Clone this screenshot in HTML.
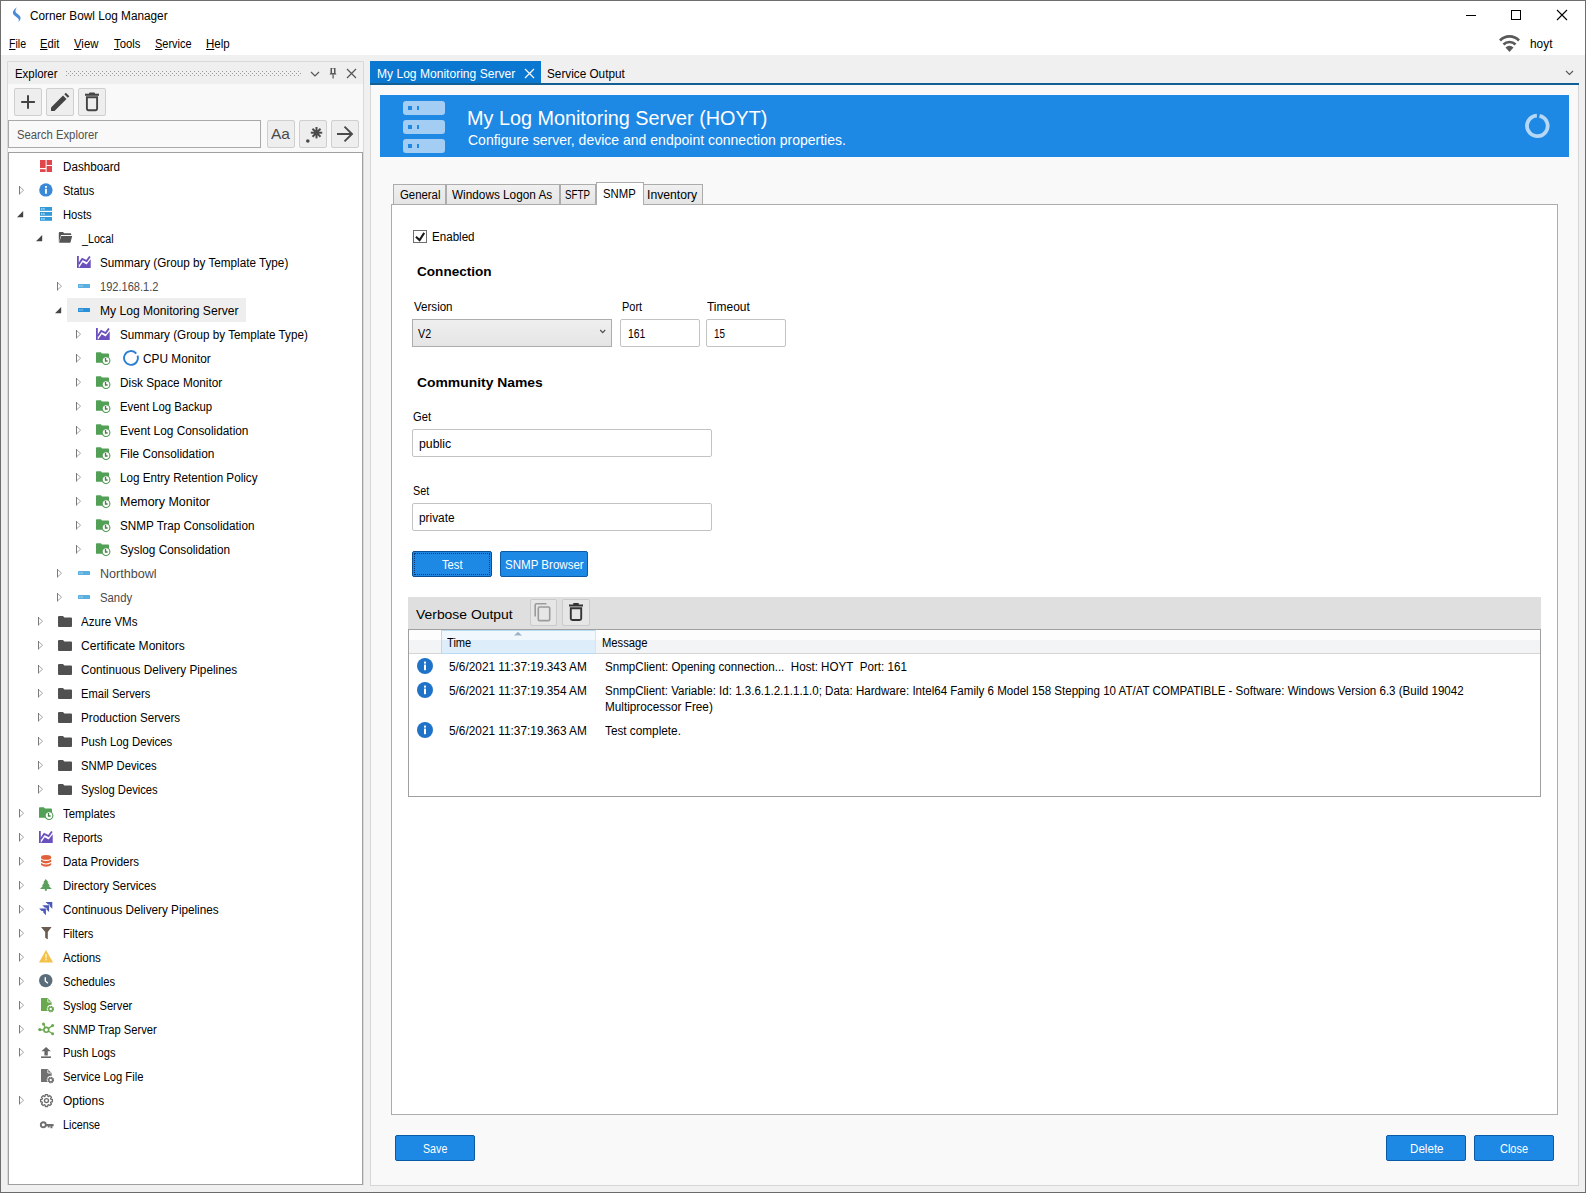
<!DOCTYPE html>
<html><head><meta charset="utf-8"><style>
html,body{margin:0;padding:0;width:1586px;height:1193px;overflow:hidden;background:#f0f0f0}
body{position:relative;font-family:"Liberation Sans", sans-serif;}
.b{position:absolute;display:block}
.t{position:absolute;white-space:nowrap;line-height:1.2;font-family:"Liberation Sans", sans-serif}
</style></head><body>
<div class="b" style="left:0px;top:0px;width:1586px;height:1193px;background:#f0f0f0"></div>
<div class="b" style="left:0px;top:0px;width:1586px;height:55px;background:#fff"></div>
<div class="b" style="left:0px;top:0px;width:1586px;height:1px;background:#6e6e6e"></div>
<div class="b" style="left:0px;top:0px;width:1px;height:1193px;background:#6e6e6e"></div>
<div class="b" style="left:1585px;top:0px;width:1px;height:1193px;background:#6e6e6e"></div>
<div class="b" style="left:0px;top:1192px;width:1586px;height:1px;background:#6a6a6a"></div>
<svg class="b" style="left:11px;top:6px;" width="12" height="18" viewBox="0 0 12 18"><path d="M5.9 1.2 C3.2 3 1.2 5.5 2.2 8 C3 10 6.5 11 7.6 13 C8 14 7.8 15 7.3 16 C9.5 14.5 10 12.5 9.2 10.6 C8.2 8.5 5 7.5 4.6 6 C4.2 4.5 4.8 2.8 5.9 1.2 Z" fill="#4a8ad6"/></svg>
<div class="t" style="left:30.40px;top:8.64px;font-size:12px;color:#000;font-weight:normal;"><span style="display:inline-block;transform:scaleX(0.9823);transform-origin:0 0">Corner Bowl Log Manager</span></div>
<div class="b" style="left:1466px;top:15px;width:10px;height:1px;background:#000"></div>
<div class="b" style="left:1511px;top:10px;width:10px;height:10px;border:1px solid #000;box-sizing:border-box"></div>
<svg class="b" style="left:1556px;top:9px;" width="12" height="12" viewBox="0 0 12 12"><path d="M1 1 L11 11 M11 1 L1 11" stroke="#000" stroke-width="1.1"/></svg>
<svg class="b" style="left:1498px;top:33px;" width="23" height="20" viewBox="0 0 23 20"><path d="M2 7.5 A13 13 0 0 1 21 7.5" stroke="#595959" stroke-width="2.6" fill="none"/><path d="M5.5 11.5 A8.5 8.5 0 0 1 17.5 11.5" stroke="#595959" stroke-width="2.6" fill="none"/><path d="M7.5 14.5 L11.5 19 L15.5 14.5 A5.5 5.5 0 0 0 7.5 14.5Z" fill="#595959"/></svg>
<div class="t" style="left:1529.80px;top:36.64px;font-size:12px;color:#000;font-weight:normal;"><span style="display:inline-block;transform:scaleX(0.9894);transform-origin:0 0">hoyt</span></div>
<div class="t" style="left:8.70px;top:36.64px;font-size:12px;color:#000;font-weight:normal;"><span style="display:inline-block;transform:scaleX(0.8799);transform-origin:0 0"><u>F</u>ile</span></div>
<div class="t" style="left:40.30px;top:36.64px;font-size:12px;color:#000;font-weight:normal;"><span style="display:inline-block;transform:scaleX(0.9324);transform-origin:0 0"><u>E</u>dit</span></div>
<div class="t" style="left:74.40px;top:36.64px;font-size:12px;color:#000;font-weight:normal;"><span style="display:inline-block;transform:scaleX(0.9454);transform-origin:0 0"><u>V</u>iew</span></div>
<div class="t" style="left:113.60px;top:36.64px;font-size:12px;color:#000;font-weight:normal;"><span style="display:inline-block;transform:scaleX(0.9424);transform-origin:0 0"><u>T</u>ools</span></div>
<div class="t" style="left:154.60px;top:36.64px;font-size:12px;color:#000;font-weight:normal;"><span style="display:inline-block;transform:scaleX(0.9122);transform-origin:0 0"><u>S</u>ervice</span></div>
<div class="t" style="left:206.00px;top:36.64px;font-size:12px;color:#000;font-weight:normal;"><span style="display:inline-block;transform:scaleX(0.9598);transform-origin:0 0"><u>H</u>elp</span></div>
<div class="b" style="left:7px;top:61px;width:357px;height:1124px;background:#f9f9f9;border:1px solid #d9d9d9;box-sizing:border-box"></div>
<div class="b" style="left:8px;top:62px;width:355px;height:22px;background:#efefef"></div>
<div class="t" style="left:14.60px;top:66.64px;font-size:12px;color:#000;font-weight:normal;"><span style="display:inline-block;transform:scaleX(0.9510);transform-origin:0 0">Explorer</span></div>
<svg class="b" style="left:64px;top:71px;" width="238" height="5" viewBox="0 0 238 5"><g fill="#9a9a9a"><rect x="2" y="0" width="1" height="1"/><rect x="4" y="2" width="1" height="1"/><rect x="2" y="4" width="1" height="1"/><rect x="6" y="0" width="1" height="1"/><rect x="8" y="2" width="1" height="1"/><rect x="6" y="4" width="1" height="1"/><rect x="10" y="0" width="1" height="1"/><rect x="12" y="2" width="1" height="1"/><rect x="10" y="4" width="1" height="1"/><rect x="14" y="0" width="1" height="1"/><rect x="16" y="2" width="1" height="1"/><rect x="14" y="4" width="1" height="1"/><rect x="18" y="0" width="1" height="1"/><rect x="20" y="2" width="1" height="1"/><rect x="18" y="4" width="1" height="1"/><rect x="22" y="0" width="1" height="1"/><rect x="24" y="2" width="1" height="1"/><rect x="22" y="4" width="1" height="1"/><rect x="26" y="0" width="1" height="1"/><rect x="28" y="2" width="1" height="1"/><rect x="26" y="4" width="1" height="1"/><rect x="30" y="0" width="1" height="1"/><rect x="32" y="2" width="1" height="1"/><rect x="30" y="4" width="1" height="1"/><rect x="34" y="0" width="1" height="1"/><rect x="36" y="2" width="1" height="1"/><rect x="34" y="4" width="1" height="1"/><rect x="38" y="0" width="1" height="1"/><rect x="40" y="2" width="1" height="1"/><rect x="38" y="4" width="1" height="1"/><rect x="42" y="0" width="1" height="1"/><rect x="44" y="2" width="1" height="1"/><rect x="42" y="4" width="1" height="1"/><rect x="46" y="0" width="1" height="1"/><rect x="48" y="2" width="1" height="1"/><rect x="46" y="4" width="1" height="1"/><rect x="50" y="0" width="1" height="1"/><rect x="52" y="2" width="1" height="1"/><rect x="50" y="4" width="1" height="1"/><rect x="54" y="0" width="1" height="1"/><rect x="56" y="2" width="1" height="1"/><rect x="54" y="4" width="1" height="1"/><rect x="58" y="0" width="1" height="1"/><rect x="60" y="2" width="1" height="1"/><rect x="58" y="4" width="1" height="1"/><rect x="62" y="0" width="1" height="1"/><rect x="64" y="2" width="1" height="1"/><rect x="62" y="4" width="1" height="1"/><rect x="66" y="0" width="1" height="1"/><rect x="68" y="2" width="1" height="1"/><rect x="66" y="4" width="1" height="1"/><rect x="70" y="0" width="1" height="1"/><rect x="72" y="2" width="1" height="1"/><rect x="70" y="4" width="1" height="1"/><rect x="74" y="0" width="1" height="1"/><rect x="76" y="2" width="1" height="1"/><rect x="74" y="4" width="1" height="1"/><rect x="78" y="0" width="1" height="1"/><rect x="80" y="2" width="1" height="1"/><rect x="78" y="4" width="1" height="1"/><rect x="82" y="0" width="1" height="1"/><rect x="84" y="2" width="1" height="1"/><rect x="82" y="4" width="1" height="1"/><rect x="86" y="0" width="1" height="1"/><rect x="88" y="2" width="1" height="1"/><rect x="86" y="4" width="1" height="1"/><rect x="90" y="0" width="1" height="1"/><rect x="92" y="2" width="1" height="1"/><rect x="90" y="4" width="1" height="1"/><rect x="94" y="0" width="1" height="1"/><rect x="96" y="2" width="1" height="1"/><rect x="94" y="4" width="1" height="1"/><rect x="98" y="0" width="1" height="1"/><rect x="100" y="2" width="1" height="1"/><rect x="98" y="4" width="1" height="1"/><rect x="102" y="0" width="1" height="1"/><rect x="104" y="2" width="1" height="1"/><rect x="102" y="4" width="1" height="1"/><rect x="106" y="0" width="1" height="1"/><rect x="108" y="2" width="1" height="1"/><rect x="106" y="4" width="1" height="1"/><rect x="110" y="0" width="1" height="1"/><rect x="112" y="2" width="1" height="1"/><rect x="110" y="4" width="1" height="1"/><rect x="114" y="0" width="1" height="1"/><rect x="116" y="2" width="1" height="1"/><rect x="114" y="4" width="1" height="1"/><rect x="118" y="0" width="1" height="1"/><rect x="120" y="2" width="1" height="1"/><rect x="118" y="4" width="1" height="1"/><rect x="122" y="0" width="1" height="1"/><rect x="124" y="2" width="1" height="1"/><rect x="122" y="4" width="1" height="1"/><rect x="126" y="0" width="1" height="1"/><rect x="128" y="2" width="1" height="1"/><rect x="126" y="4" width="1" height="1"/><rect x="130" y="0" width="1" height="1"/><rect x="132" y="2" width="1" height="1"/><rect x="130" y="4" width="1" height="1"/><rect x="134" y="0" width="1" height="1"/><rect x="136" y="2" width="1" height="1"/><rect x="134" y="4" width="1" height="1"/><rect x="138" y="0" width="1" height="1"/><rect x="140" y="2" width="1" height="1"/><rect x="138" y="4" width="1" height="1"/><rect x="142" y="0" width="1" height="1"/><rect x="144" y="2" width="1" height="1"/><rect x="142" y="4" width="1" height="1"/><rect x="146" y="0" width="1" height="1"/><rect x="148" y="2" width="1" height="1"/><rect x="146" y="4" width="1" height="1"/><rect x="150" y="0" width="1" height="1"/><rect x="152" y="2" width="1" height="1"/><rect x="150" y="4" width="1" height="1"/><rect x="154" y="0" width="1" height="1"/><rect x="156" y="2" width="1" height="1"/><rect x="154" y="4" width="1" height="1"/><rect x="158" y="0" width="1" height="1"/><rect x="160" y="2" width="1" height="1"/><rect x="158" y="4" width="1" height="1"/><rect x="162" y="0" width="1" height="1"/><rect x="164" y="2" width="1" height="1"/><rect x="162" y="4" width="1" height="1"/><rect x="166" y="0" width="1" height="1"/><rect x="168" y="2" width="1" height="1"/><rect x="166" y="4" width="1" height="1"/><rect x="170" y="0" width="1" height="1"/><rect x="172" y="2" width="1" height="1"/><rect x="170" y="4" width="1" height="1"/><rect x="174" y="0" width="1" height="1"/><rect x="176" y="2" width="1" height="1"/><rect x="174" y="4" width="1" height="1"/><rect x="178" y="0" width="1" height="1"/><rect x="180" y="2" width="1" height="1"/><rect x="178" y="4" width="1" height="1"/><rect x="182" y="0" width="1" height="1"/><rect x="184" y="2" width="1" height="1"/><rect x="182" y="4" width="1" height="1"/><rect x="186" y="0" width="1" height="1"/><rect x="188" y="2" width="1" height="1"/><rect x="186" y="4" width="1" height="1"/><rect x="190" y="0" width="1" height="1"/><rect x="192" y="2" width="1" height="1"/><rect x="190" y="4" width="1" height="1"/><rect x="194" y="0" width="1" height="1"/><rect x="196" y="2" width="1" height="1"/><rect x="194" y="4" width="1" height="1"/><rect x="198" y="0" width="1" height="1"/><rect x="200" y="2" width="1" height="1"/><rect x="198" y="4" width="1" height="1"/><rect x="202" y="0" width="1" height="1"/><rect x="204" y="2" width="1" height="1"/><rect x="202" y="4" width="1" height="1"/><rect x="206" y="0" width="1" height="1"/><rect x="208" y="2" width="1" height="1"/><rect x="206" y="4" width="1" height="1"/><rect x="210" y="0" width="1" height="1"/><rect x="212" y="2" width="1" height="1"/><rect x="210" y="4" width="1" height="1"/><rect x="214" y="0" width="1" height="1"/><rect x="216" y="2" width="1" height="1"/><rect x="214" y="4" width="1" height="1"/><rect x="218" y="0" width="1" height="1"/><rect x="220" y="2" width="1" height="1"/><rect x="218" y="4" width="1" height="1"/><rect x="222" y="0" width="1" height="1"/><rect x="224" y="2" width="1" height="1"/><rect x="222" y="4" width="1" height="1"/><rect x="226" y="0" width="1" height="1"/><rect x="228" y="2" width="1" height="1"/><rect x="226" y="4" width="1" height="1"/><rect x="230" y="0" width="1" height="1"/><rect x="232" y="2" width="1" height="1"/><rect x="230" y="4" width="1" height="1"/><rect x="234" y="0" width="1" height="1"/><rect x="236" y="2" width="1" height="1"/><rect x="234" y="4" width="1" height="1"/></g></svg>
<svg class="b" style="left:310px;top:71px;" width="10" height="6" viewBox="0 0 10 6"><path d="M1 1 L5 5 L9 1" stroke="#555" stroke-width="1.2" fill="none"/></svg>
<svg class="b" style="left:328px;top:67px;" width="10" height="12" viewBox="0 0 10 12"><path d="M2.5 1 H7.5 V6 L8.5 7.5 H1.5 L2.5 6 Z" fill="#555"/><rect x="4" y="1.5" width="2" height="4.5" fill="#eee"/><rect x="4.5" y="7.5" width="1.2" height="4" fill="#555"/></svg>
<svg class="b" style="left:346px;top:68px;" width="11" height="11" viewBox="0 0 11 11"><path d="M1 1 L10 10 M10 1 L1 10" stroke="#555" stroke-width="1.2"/></svg>
<div class="b" style="left:14px;top:88px;width:28px;height:28px;background:#eeeeee;border:1px solid #cfcfcf;border-radius:2px;box-sizing:border-box"></div>
<div class="b" style="left:46px;top:88px;width:28px;height:28px;background:#eeeeee;border:1px solid #cfcfcf;border-radius:2px;box-sizing:border-box"></div>
<div class="b" style="left:78px;top:88px;width:28px;height:28px;background:#eeeeee;border:1px solid #cfcfcf;border-radius:2px;box-sizing:border-box"></div>
<svg class="b" style="left:14px;top:88px;" width="28" height="28" viewBox="0 0 28 28"><path d="M14 7.2 V20.8 M7.2 14 H20.9" stroke="#444" stroke-width="2"/></svg>
<svg class="b" style="left:46px;top:88px;" width="28" height="28" viewBox="0 0 28 28"><path d="M5 19.5 L17 7.5 L20.5 11 L8.5 23 L5 23 Z" fill="#444"/><path d="M18.3 6.2 L19.8 4.7 L23.3 8.2 L21.8 9.7 Z" fill="#444"/></svg>
<svg class="b" style="left:78px;top:88px;" width="28" height="28" viewBox="0 0 28 28"><rect x="7" y="5.7" width="14" height="2.1" fill="#444"/><rect x="11" y="4.6" width="6" height="2" rx="1" fill="#444"/><path d="M8.9 9.3 H19.1 V20.3 Q19.1 22.2 17.4 22.2 H10.6 Q8.9 22.2 8.9 20.3 Z" fill="none" stroke="#444" stroke-width="1.9"/></svg>
<div class="b" style="left:8px;top:120px;width:253px;height:28px;background:#f9f9f9;border:1px solid #a9a9a9;box-sizing:border-box"></div>
<div class="t" style="left:17.30px;top:127.84px;font-size:12px;color:#505050;font-weight:normal;"><span style="display:inline-block;transform:scaleX(0.9414);transform-origin:0 0">Search Explorer</span></div>
<div class="b" style="left:267px;top:120px;width:28px;height:28px;background:#eeeeee;border:1px solid #cfcfcf;border-radius:2px;box-sizing:border-box"></div>
<div class="b" style="left:299px;top:120px;width:28px;height:28px;background:#eeeeee;border:1px solid #cfcfcf;border-radius:2px;box-sizing:border-box"></div>
<div class="b" style="left:331px;top:120px;width:28px;height:28px;background:#eeeeee;border:1px solid #cfcfcf;border-radius:2px;box-sizing:border-box"></div>
<div class="t" style="left:271.10px;top:125.30px;font-size:15px;color:#4a4a4a;font-weight:normal;"><span style="display:inline-block;transform:scaleX(1.0313);transform-origin:0 0">Aa</span></div>
<svg class="b" style="left:299px;top:120px;" width="28" height="28" viewBox="0 0 28 28"><circle cx="8.8" cy="21" r="1.8" fill="#4a4a4a"/><g stroke="#4a4a4a" stroke-width="2"><path d="M17.5 7 V18.4"/><path d="M11.8 12.7 H23.2"/><path d="M13.5 8.7 L21.5 16.7"/><path d="M21.5 8.7 L13.5 16.7"/></g><circle cx="17.5" cy="12.7" r="2.6" fill="#4a4a4a"/></svg>
<svg class="b" style="left:331px;top:120px;" width="28" height="28" viewBox="0 0 28 28"><path d="M6 14 H21.2 M13.5 6.6 L21 14 L13.5 21.4" stroke="#4a4a4a" stroke-width="1.9" fill="none"/></svg>
<div class="b" style="left:8px;top:152px;width:355px;height:1033px;background:#fff;border:1px solid #a0a0a0;box-sizing:border-box"></div>
<svg class="b" style="left:40px;top:160.0px;overflow:visible" width="12" height="12" viewBox="0 0 12 12"><g fill="#e0474c"><rect x="0" y="0" width="5.6" height="8"/><rect x="0" y="9.2" width="5.6" height="2.8"/><rect x="6.6" y="0" width="5.4" height="5"/><rect x="6.6" y="6" width="5.4" height="6"/></g></svg>
<div class="t" style="left:62.80px;top:159.54px;font-size:12px;color:#000;font-weight:normal;"><span style="display:inline-block;transform:scaleX(0.9719);transform-origin:0 0">Dashboard</span></div>
<svg class="b" style="left:19px;top:186.0px;" width="6" height="9" viewBox="0 0 6 9"><path d="M0.5 0.5 L4.6 4.2 L0.5 7.9" fill="none" stroke="#a6a6a6" stroke-width="1"/><path d="M0.5 0 V8.4" stroke="#7a7a7a" stroke-width="1"/></svg>
<svg class="b" style="left:39px;top:183.0px;overflow:visible" width="14" height="14" viewBox="0 0 14 14"><circle cx="6.9" cy="6.9" r="6.7" fill="#3a88d8"/><rect x="6" y="3" width="1.9" height="1.8" fill="#fff"/><rect x="6" y="5.8" width="1.9" height="4.9" fill="#fff"/></svg>
<div class="t" style="left:62.80px;top:183.54px;font-size:12px;color:#000;font-weight:normal;"><span style="display:inline-block;transform:scaleX(0.9171);transform-origin:0 0">Status</span></div>
<svg class="b" style="left:16.5px;top:211.0px;" width="7" height="7" viewBox="0 0 7 7"><path d="M6.2 0 V6.2 H0 Z" fill="#454545"/></svg>
<svg class="b" style="left:40px;top:206.5px;overflow:visible" width="12" height="14" viewBox="0 0 12 14"><g fill="#3399d9"><rect x="0" y="0" width="12" height="3.8"/><rect x="0" y="5" width="12" height="3.8"/><rect x="0" y="10" width="12" height="3.8"/></g><g fill="#e6f3fb"><rect x="1.1" y="1.3" width="1.3" height="1.3"/><rect x="3.3" y="1.3" width="1.3" height="1.3"/><rect x="1.1" y="6.3" width="1.3" height="1.3"/><rect x="3.3" y="6.3" width="1.3" height="1.3"/><rect x="1.1" y="11.3" width="1.3" height="1.3"/><rect x="3.3" y="11.3" width="1.3" height="1.3"/></g></svg>
<div class="t" style="left:62.80px;top:207.54px;font-size:12px;color:#000;font-weight:normal;"><span style="display:inline-block;transform:scaleX(0.9357);transform-origin:0 0">Hosts</span></div>
<svg class="b" style="left:35.5px;top:235.0px;" width="7" height="7" viewBox="0 0 7 7"><path d="M6.2 0 V6.2 H0 Z" fill="#454545"/></svg>
<svg class="b" style="left:58px;top:231.5px;overflow:visible" width="15" height="11" viewBox="0 0 15 11"><path d="M0.8 1 Q0.8 0 1.8 0 H5 L6.2 1.2 H12.5 Q13.2 1.2 13.2 2 V3 H3 L1 10 H0.8 Z" fill="#555"/><path d="M3.2 4 H14.2 L12.4 10.8 H1 Z" fill="#555"/></svg>
<div class="t" style="left:82.19px;top:231.54px;font-size:12px;color:#000;font-weight:normal;"><span style="display:inline-block;transform:scaleX(0.8909);transform-origin:0 0">_Local</span></div>
<svg class="b" style="left:77px;top:255.5px;overflow:visible" width="14" height="12" viewBox="0 0 14 12"><g fill="#6a4fbd"><rect x="0" y="0" width="1.8" height="12"/><path d="M1.8 12 L5.7 6.3 L9.6 8.4 L13.7 3.2 V12 Z"/></g><path d="M1.6 8.2 L5.2 2.9 L9.6 5.1 L12.9 0.4" fill="none" stroke="#6a4fbd" stroke-width="1.8"/></svg>
<div class="t" style="left:100.30px;top:255.54px;font-size:12px;color:#000;font-weight:normal;"><span style="display:inline-block;transform:scaleX(0.9757);transform-origin:0 0">Summary (Group by Template Type)</span></div>
<svg class="b" style="left:57px;top:282.0px;" width="6" height="9" viewBox="0 0 6 9"><path d="M0.5 0.5 L4.6 4.2 L0.5 7.9" fill="none" stroke="#a6a6a6" stroke-width="1"/><path d="M0.5 0 V8.4" stroke="#7a7a7a" stroke-width="1"/></svg>
<svg class="b" style="left:78px;top:283.7px;overflow:visible" width="12" height="4" viewBox="0 0 12 4"><rect x="0" y="0" width="12" height="4" rx="0.5" fill="#5aaee0"/><rect x="1.3" y="1.5" width="1.2" height="1" fill="#d8eefa"/><rect x="3.5" y="1.5" width="1.2" height="1" fill="#d8eefa"/></svg>
<div class="t" style="left:100.30px;top:279.54px;font-size:12px;color:#4a4a4a;font-weight:normal;"><span style="display:inline-block;transform:scaleX(0.9228);transform-origin:0 0">192.168.1.2</span></div>
<div class="b" style="left:67px;top:298px;width:179px;height:24px;background:#eeeeee"></div>
<svg class="b" style="left:54.5px;top:307.0px;" width="7" height="7" viewBox="0 0 7 7"><path d="M6.2 0 V6.2 H0 Z" fill="#454545"/></svg>
<svg class="b" style="left:78px;top:307.7px;overflow:visible" width="12" height="4" viewBox="0 0 12 4"><rect x="0" y="0" width="12" height="4" rx="0.5" fill="#2a90d8"/><rect x="1.3" y="1.5" width="1.2" height="1" fill="#cfe6f7"/><rect x="3.5" y="1.5" width="1.2" height="1" fill="#cfe6f7"/></svg>
<div class="t" style="left:100.30px;top:303.54px;font-size:12px;color:#000;font-weight:normal;"><span style="display:inline-block;transform:scaleX(1.0080);transform-origin:0 0">My Log Monitoring Server</span></div>
<svg class="b" style="left:76px;top:330.0px;" width="6" height="9" viewBox="0 0 6 9"><path d="M0.5 0.5 L4.6 4.2 L0.5 7.9" fill="none" stroke="#a6a6a6" stroke-width="1"/><path d="M0.5 0 V8.4" stroke="#7a7a7a" stroke-width="1"/></svg>
<svg class="b" style="left:96px;top:327.5px;overflow:visible" width="14" height="12" viewBox="0 0 14 12"><g fill="#6a4fbd"><rect x="0" y="0" width="1.8" height="12"/><path d="M1.8 12 L5.7 6.3 L9.6 8.4 L13.7 3.2 V12 Z"/></g><path d="M1.6 8.2 L5.2 2.9 L9.6 5.1 L12.9 0.4" fill="none" stroke="#6a4fbd" stroke-width="1.8"/></svg>
<div class="t" style="left:119.50px;top:327.54px;font-size:12px;color:#000;font-weight:normal;"><span style="display:inline-block;transform:scaleX(0.9731);transform-origin:0 0">Summary (Group by Template Type)</span></div>
<svg class="b" style="left:76px;top:354.0px;" width="6" height="9" viewBox="0 0 6 9"><path d="M0.5 0.5 L4.6 4.2 L0.5 7.9" fill="none" stroke="#a6a6a6" stroke-width="1"/><path d="M0.5 0 V8.4" stroke="#7a7a7a" stroke-width="1"/></svg>
<svg class="b" style="left:95.8px;top:351.7px;overflow:visible" width="15" height="14" viewBox="0 0 15 14"><path d="M0 1 Q0 0.2 0.8 0.2 H4.8 L6 1.6 H12.2 Q13 1.6 13 2.4 V10.8 H0 Z" fill="#52a056"/><circle cx="10" cy="8.6" r="3.9" fill="#fff" stroke="#4f9a53" stroke-width="1.1"/><path d="M9.5 6.1 V9 H11.6" stroke="#447f48" stroke-width="1.3" fill="none"/></svg>
<svg class="b" style="left:123px;top:349.5px;" width="16" height="16" viewBox="0 0 16 16"><path d="M13.29 3.56 A6.9 6.9 0 1 0 14.48 5.64" fill="none" stroke="#2b7ed2" stroke-width="1.9"/></svg>
<div class="t" style="left:143.40px;top:351.54px;font-size:12px;color:#000;font-weight:normal;"><span style="display:inline-block;transform:scaleX(0.9871);transform-origin:0 0">CPU Monitor</span></div>
<svg class="b" style="left:76px;top:378.0px;" width="6" height="9" viewBox="0 0 6 9"><path d="M0.5 0.5 L4.6 4.2 L0.5 7.9" fill="none" stroke="#a6a6a6" stroke-width="1"/><path d="M0.5 0 V8.4" stroke="#7a7a7a" stroke-width="1"/></svg>
<svg class="b" style="left:95.8px;top:375.7px;overflow:visible" width="15" height="14" viewBox="0 0 15 14"><path d="M0 1 Q0 0.2 0.8 0.2 H4.8 L6 1.6 H12.2 Q13 1.6 13 2.4 V10.8 H0 Z" fill="#52a056"/><circle cx="10" cy="8.6" r="3.9" fill="#fff" stroke="#4f9a53" stroke-width="1.1"/><path d="M9.5 6.1 V9 H11.6" stroke="#447f48" stroke-width="1.3" fill="none"/></svg>
<div class="t" style="left:119.50px;top:375.54px;font-size:12px;color:#000;font-weight:normal;"><span style="display:inline-block;transform:scaleX(0.9823);transform-origin:0 0">Disk Space Monitor</span></div>
<svg class="b" style="left:76px;top:402.0px;" width="6" height="9" viewBox="0 0 6 9"><path d="M0.5 0.5 L4.6 4.2 L0.5 7.9" fill="none" stroke="#a6a6a6" stroke-width="1"/><path d="M0.5 0 V8.4" stroke="#7a7a7a" stroke-width="1"/></svg>
<svg class="b" style="left:95.8px;top:399.7px;overflow:visible" width="15" height="14" viewBox="0 0 15 14"><path d="M0 1 Q0 0.2 0.8 0.2 H4.8 L6 1.6 H12.2 Q13 1.6 13 2.4 V10.8 H0 Z" fill="#52a056"/><circle cx="10" cy="8.6" r="3.9" fill="#fff" stroke="#4f9a53" stroke-width="1.1"/><path d="M9.5 6.1 V9 H11.6" stroke="#447f48" stroke-width="1.3" fill="none"/></svg>
<div class="t" style="left:119.50px;top:399.54px;font-size:12px;color:#000;font-weight:normal;"><span style="display:inline-block;transform:scaleX(0.9465);transform-origin:0 0">Event Log Backup</span></div>
<svg class="b" style="left:76px;top:426.0px;" width="6" height="9" viewBox="0 0 6 9"><path d="M0.5 0.5 L4.6 4.2 L0.5 7.9" fill="none" stroke="#a6a6a6" stroke-width="1"/><path d="M0.5 0 V8.4" stroke="#7a7a7a" stroke-width="1"/></svg>
<svg class="b" style="left:95.8px;top:423.7px;overflow:visible" width="15" height="14" viewBox="0 0 15 14"><path d="M0 1 Q0 0.2 0.8 0.2 H4.8 L6 1.6 H12.2 Q13 1.6 13 2.4 V10.8 H0 Z" fill="#52a056"/><circle cx="10" cy="8.6" r="3.9" fill="#fff" stroke="#4f9a53" stroke-width="1.1"/><path d="M9.5 6.1 V9 H11.6" stroke="#447f48" stroke-width="1.3" fill="none"/></svg>
<div class="t" style="left:119.50px;top:423.54px;font-size:12px;color:#000;font-weight:normal;"><span style="display:inline-block;transform:scaleX(0.9875);transform-origin:0 0">Event Log Consolidation</span></div>
<svg class="b" style="left:76px;top:449.0px;" width="6" height="9" viewBox="0 0 6 9"><path d="M0.5 0.5 L4.6 4.2 L0.5 7.9" fill="none" stroke="#a6a6a6" stroke-width="1"/><path d="M0.5 0 V8.4" stroke="#7a7a7a" stroke-width="1"/></svg>
<svg class="b" style="left:95.8px;top:446.7px;overflow:visible" width="15" height="14" viewBox="0 0 15 14"><path d="M0 1 Q0 0.2 0.8 0.2 H4.8 L6 1.6 H12.2 Q13 1.6 13 2.4 V10.8 H0 Z" fill="#52a056"/><circle cx="10" cy="8.6" r="3.9" fill="#fff" stroke="#4f9a53" stroke-width="1.1"/><path d="M9.5 6.1 V9 H11.6" stroke="#447f48" stroke-width="1.3" fill="none"/></svg>
<div class="t" style="left:119.50px;top:446.54px;font-size:12px;color:#000;font-weight:normal;"><span style="display:inline-block;transform:scaleX(0.9893);transform-origin:0 0">File Consolidation</span></div>
<svg class="b" style="left:76px;top:473.0px;" width="6" height="9" viewBox="0 0 6 9"><path d="M0.5 0.5 L4.6 4.2 L0.5 7.9" fill="none" stroke="#a6a6a6" stroke-width="1"/><path d="M0.5 0 V8.4" stroke="#7a7a7a" stroke-width="1"/></svg>
<svg class="b" style="left:95.8px;top:470.7px;overflow:visible" width="15" height="14" viewBox="0 0 15 14"><path d="M0 1 Q0 0.2 0.8 0.2 H4.8 L6 1.6 H12.2 Q13 1.6 13 2.4 V10.8 H0 Z" fill="#52a056"/><circle cx="10" cy="8.6" r="3.9" fill="#fff" stroke="#4f9a53" stroke-width="1.1"/><path d="M9.5 6.1 V9 H11.6" stroke="#447f48" stroke-width="1.3" fill="none"/></svg>
<div class="t" style="left:119.50px;top:470.54px;font-size:12px;color:#000;font-weight:normal;"><span style="display:inline-block;transform:scaleX(0.9723);transform-origin:0 0">Log Entry Retention Policy</span></div>
<svg class="b" style="left:76px;top:497.0px;" width="6" height="9" viewBox="0 0 6 9"><path d="M0.5 0.5 L4.6 4.2 L0.5 7.9" fill="none" stroke="#a6a6a6" stroke-width="1"/><path d="M0.5 0 V8.4" stroke="#7a7a7a" stroke-width="1"/></svg>
<svg class="b" style="left:95.8px;top:494.7px;overflow:visible" width="15" height="14" viewBox="0 0 15 14"><path d="M0 1 Q0 0.2 0.8 0.2 H4.8 L6 1.6 H12.2 Q13 1.6 13 2.4 V10.8 H0 Z" fill="#52a056"/><circle cx="10" cy="8.6" r="3.9" fill="#fff" stroke="#4f9a53" stroke-width="1.1"/><path d="M9.5 6.1 V9 H11.6" stroke="#447f48" stroke-width="1.3" fill="none"/></svg>
<div class="t" style="left:119.50px;top:494.54px;font-size:12px;color:#000;font-weight:normal;"><span style="display:inline-block;transform:scaleX(1.0382);transform-origin:0 0">Memory Monitor</span></div>
<svg class="b" style="left:76px;top:521.0px;" width="6" height="9" viewBox="0 0 6 9"><path d="M0.5 0.5 L4.6 4.2 L0.5 7.9" fill="none" stroke="#a6a6a6" stroke-width="1"/><path d="M0.5 0 V8.4" stroke="#7a7a7a" stroke-width="1"/></svg>
<svg class="b" style="left:95.8px;top:518.7px;overflow:visible" width="15" height="14" viewBox="0 0 15 14"><path d="M0 1 Q0 0.2 0.8 0.2 H4.8 L6 1.6 H12.2 Q13 1.6 13 2.4 V10.8 H0 Z" fill="#52a056"/><circle cx="10" cy="8.6" r="3.9" fill="#fff" stroke="#4f9a53" stroke-width="1.1"/><path d="M9.5 6.1 V9 H11.6" stroke="#447f48" stroke-width="1.3" fill="none"/></svg>
<div class="t" style="left:119.50px;top:518.54px;font-size:12px;color:#000;font-weight:normal;"><span style="display:inline-block;transform:scaleX(0.9752);transform-origin:0 0">SNMP Trap Consolidation</span></div>
<svg class="b" style="left:76px;top:545.0px;" width="6" height="9" viewBox="0 0 6 9"><path d="M0.5 0.5 L4.6 4.2 L0.5 7.9" fill="none" stroke="#a6a6a6" stroke-width="1"/><path d="M0.5 0 V8.4" stroke="#7a7a7a" stroke-width="1"/></svg>
<svg class="b" style="left:95.8px;top:542.7px;overflow:visible" width="15" height="14" viewBox="0 0 15 14"><path d="M0 1 Q0 0.2 0.8 0.2 H4.8 L6 1.6 H12.2 Q13 1.6 13 2.4 V10.8 H0 Z" fill="#52a056"/><circle cx="10" cy="8.6" r="3.9" fill="#fff" stroke="#4f9a53" stroke-width="1.1"/><path d="M9.5 6.1 V9 H11.6" stroke="#447f48" stroke-width="1.3" fill="none"/></svg>
<div class="t" style="left:119.50px;top:542.54px;font-size:12px;color:#000;font-weight:normal;"><span style="display:inline-block;transform:scaleX(0.9821);transform-origin:0 0">Syslog Consolidation</span></div>
<svg class="b" style="left:57px;top:569.0px;" width="6" height="9" viewBox="0 0 6 9"><path d="M0.5 0.5 L4.6 4.2 L0.5 7.9" fill="none" stroke="#a6a6a6" stroke-width="1"/><path d="M0.5 0 V8.4" stroke="#7a7a7a" stroke-width="1"/></svg>
<svg class="b" style="left:78px;top:570.7px;overflow:visible" width="12" height="4" viewBox="0 0 12 4"><rect x="0" y="0" width="12" height="4" rx="0.5" fill="#5aaee0"/><rect x="1.3" y="1.5" width="1.2" height="1" fill="#d8eefa"/><rect x="3.5" y="1.5" width="1.2" height="1" fill="#d8eefa"/></svg>
<div class="t" style="left:100.30px;top:566.54px;font-size:12px;color:#4a4a4a;font-weight:normal;"><span style="display:inline-block;transform:scaleX(1.0477);transform-origin:0 0">Northbowl</span></div>
<svg class="b" style="left:57px;top:593.0px;" width="6" height="9" viewBox="0 0 6 9"><path d="M0.5 0.5 L4.6 4.2 L0.5 7.9" fill="none" stroke="#a6a6a6" stroke-width="1"/><path d="M0.5 0 V8.4" stroke="#7a7a7a" stroke-width="1"/></svg>
<svg class="b" style="left:78px;top:594.7px;overflow:visible" width="12" height="4" viewBox="0 0 12 4"><rect x="0" y="0" width="12" height="4" rx="0.5" fill="#5aaee0"/><rect x="1.3" y="1.5" width="1.2" height="1" fill="#d8eefa"/><rect x="3.5" y="1.5" width="1.2" height="1" fill="#d8eefa"/></svg>
<div class="t" style="left:100.30px;top:590.54px;font-size:12px;color:#4a4a4a;font-weight:normal;"><span style="display:inline-block;transform:scaleX(0.9434);transform-origin:0 0">Sandy</span></div>
<svg class="b" style="left:38px;top:617.0px;" width="6" height="9" viewBox="0 0 6 9"><path d="M0.5 0.5 L4.6 4.2 L0.5 7.9" fill="none" stroke="#a6a6a6" stroke-width="1"/><path d="M0.5 0 V8.4" stroke="#7a7a7a" stroke-width="1"/></svg>
<svg class="b" style="left:58.2px;top:615.5px;overflow:visible" width="14" height="11" viewBox="0 0 14 11"><path d="M0 1 Q0 0 1 0 H5 L6.3 1.4 H13 Q14 1.4 14 2.4 V10 Q14 11 13 11 H1 Q0 11 0 10 Z" fill="#505050"/></svg>
<div class="t" style="left:81.30px;top:614.54px;font-size:12px;color:#000;font-weight:normal;"><span style="display:inline-block;transform:scaleX(0.9628);transform-origin:0 0">Azure VMs</span></div>
<svg class="b" style="left:38px;top:641.0px;" width="6" height="9" viewBox="0 0 6 9"><path d="M0.5 0.5 L4.6 4.2 L0.5 7.9" fill="none" stroke="#a6a6a6" stroke-width="1"/><path d="M0.5 0 V8.4" stroke="#7a7a7a" stroke-width="1"/></svg>
<svg class="b" style="left:58.2px;top:639.5px;overflow:visible" width="14" height="11" viewBox="0 0 14 11"><path d="M0 1 Q0 0 1 0 H5 L6.3 1.4 H13 Q14 1.4 14 2.4 V10 Q14 11 13 11 H1 Q0 11 0 10 Z" fill="#505050"/></svg>
<div class="t" style="left:81.30px;top:638.54px;font-size:12px;color:#000;font-weight:normal;"><span style="display:inline-block;transform:scaleX(1.0042);transform-origin:0 0">Certificate Monitors</span></div>
<svg class="b" style="left:38px;top:665.0px;" width="6" height="9" viewBox="0 0 6 9"><path d="M0.5 0.5 L4.6 4.2 L0.5 7.9" fill="none" stroke="#a6a6a6" stroke-width="1"/><path d="M0.5 0 V8.4" stroke="#7a7a7a" stroke-width="1"/></svg>
<svg class="b" style="left:58.2px;top:663.5px;overflow:visible" width="14" height="11" viewBox="0 0 14 11"><path d="M0 1 Q0 0 1 0 H5 L6.3 1.4 H13 Q14 1.4 14 2.4 V10 Q14 11 13 11 H1 Q0 11 0 10 Z" fill="#505050"/></svg>
<div class="t" style="left:81.30px;top:662.54px;font-size:12px;color:#000;font-weight:normal;"><span style="display:inline-block;transform:scaleX(0.9792);transform-origin:0 0">Continuous Delivery Pipelines</span></div>
<svg class="b" style="left:38px;top:689.0px;" width="6" height="9" viewBox="0 0 6 9"><path d="M0.5 0.5 L4.6 4.2 L0.5 7.9" fill="none" stroke="#a6a6a6" stroke-width="1"/><path d="M0.5 0 V8.4" stroke="#7a7a7a" stroke-width="1"/></svg>
<svg class="b" style="left:58.2px;top:687.5px;overflow:visible" width="14" height="11" viewBox="0 0 14 11"><path d="M0 1 Q0 0 1 0 H5 L6.3 1.4 H13 Q14 1.4 14 2.4 V10 Q14 11 13 11 H1 Q0 11 0 10 Z" fill="#505050"/></svg>
<div class="t" style="left:81.30px;top:686.54px;font-size:12px;color:#000;font-weight:normal;"><span style="display:inline-block;transform:scaleX(0.9279);transform-origin:0 0">Email Servers</span></div>
<svg class="b" style="left:38px;top:713.0px;" width="6" height="9" viewBox="0 0 6 9"><path d="M0.5 0.5 L4.6 4.2 L0.5 7.9" fill="none" stroke="#a6a6a6" stroke-width="1"/><path d="M0.5 0 V8.4" stroke="#7a7a7a" stroke-width="1"/></svg>
<svg class="b" style="left:58.2px;top:711.5px;overflow:visible" width="14" height="11" viewBox="0 0 14 11"><path d="M0 1 Q0 0 1 0 H5 L6.3 1.4 H13 Q14 1.4 14 2.4 V10 Q14 11 13 11 H1 Q0 11 0 10 Z" fill="#505050"/></svg>
<div class="t" style="left:81.30px;top:710.54px;font-size:12px;color:#000;font-weight:normal;"><span style="display:inline-block;transform:scaleX(0.9711);transform-origin:0 0">Production Servers</span></div>
<svg class="b" style="left:38px;top:737.0px;" width="6" height="9" viewBox="0 0 6 9"><path d="M0.5 0.5 L4.6 4.2 L0.5 7.9" fill="none" stroke="#a6a6a6" stroke-width="1"/><path d="M0.5 0 V8.4" stroke="#7a7a7a" stroke-width="1"/></svg>
<svg class="b" style="left:58.2px;top:735.5px;overflow:visible" width="14" height="11" viewBox="0 0 14 11"><path d="M0 1 Q0 0 1 0 H5 L6.3 1.4 H13 Q14 1.4 14 2.4 V10 Q14 11 13 11 H1 Q0 11 0 10 Z" fill="#505050"/></svg>
<div class="t" style="left:81.30px;top:734.54px;font-size:12px;color:#000;font-weight:normal;"><span style="display:inline-block;transform:scaleX(0.9429);transform-origin:0 0">Push Log Devices</span></div>
<svg class="b" style="left:38px;top:761.0px;" width="6" height="9" viewBox="0 0 6 9"><path d="M0.5 0.5 L4.6 4.2 L0.5 7.9" fill="none" stroke="#a6a6a6" stroke-width="1"/><path d="M0.5 0 V8.4" stroke="#7a7a7a" stroke-width="1"/></svg>
<svg class="b" style="left:58.2px;top:759.5px;overflow:visible" width="14" height="11" viewBox="0 0 14 11"><path d="M0 1 Q0 0 1 0 H5 L6.3 1.4 H13 Q14 1.4 14 2.4 V10 Q14 11 13 11 H1 Q0 11 0 10 Z" fill="#505050"/></svg>
<div class="t" style="left:81.30px;top:758.54px;font-size:12px;color:#000;font-weight:normal;"><span style="display:inline-block;transform:scaleX(0.9395);transform-origin:0 0">SNMP Devices</span></div>
<svg class="b" style="left:38px;top:785.0px;" width="6" height="9" viewBox="0 0 6 9"><path d="M0.5 0.5 L4.6 4.2 L0.5 7.9" fill="none" stroke="#a6a6a6" stroke-width="1"/><path d="M0.5 0 V8.4" stroke="#7a7a7a" stroke-width="1"/></svg>
<svg class="b" style="left:58.2px;top:783.5px;overflow:visible" width="14" height="11" viewBox="0 0 14 11"><path d="M0 1 Q0 0 1 0 H5 L6.3 1.4 H13 Q14 1.4 14 2.4 V10 Q14 11 13 11 H1 Q0 11 0 10 Z" fill="#505050"/></svg>
<div class="t" style="left:81.30px;top:782.54px;font-size:12px;color:#000;font-weight:normal;"><span style="display:inline-block;transform:scaleX(0.9350);transform-origin:0 0">Syslog Devices</span></div>
<svg class="b" style="left:19px;top:809.0px;" width="6" height="9" viewBox="0 0 6 9"><path d="M0.5 0.5 L4.6 4.2 L0.5 7.9" fill="none" stroke="#a6a6a6" stroke-width="1"/><path d="M0.5 0 V8.4" stroke="#7a7a7a" stroke-width="1"/></svg>
<svg class="b" style="left:38.8px;top:806.7px;overflow:visible" width="15" height="14" viewBox="0 0 15 14"><path d="M0 1 Q0 0.2 0.8 0.2 H4.8 L6 1.6 H12.2 Q13 1.6 13 2.4 V10.8 H0 Z" fill="#52a056"/><circle cx="10" cy="8.6" r="3.9" fill="#fff" stroke="#4f9a53" stroke-width="1.1"/><path d="M9.5 6.1 V9 H11.6" stroke="#447f48" stroke-width="1.3" fill="none"/></svg>
<div class="t" style="left:62.80px;top:806.54px;font-size:12px;color:#000;font-weight:normal;"><span style="display:inline-block;transform:scaleX(0.9526);transform-origin:0 0">Templates</span></div>
<svg class="b" style="left:19px;top:833.0px;" width="6" height="9" viewBox="0 0 6 9"><path d="M0.5 0.5 L4.6 4.2 L0.5 7.9" fill="none" stroke="#a6a6a6" stroke-width="1"/><path d="M0.5 0 V8.4" stroke="#7a7a7a" stroke-width="1"/></svg>
<svg class="b" style="left:39px;top:830.5px;overflow:visible" width="14" height="12" viewBox="0 0 14 12"><g fill="#6a4fbd"><rect x="0" y="0" width="1.8" height="12"/><path d="M1.8 12 L5.7 6.3 L9.6 8.4 L13.7 3.2 V12 Z"/></g><path d="M1.6 8.2 L5.2 2.9 L9.6 5.1 L12.9 0.4" fill="none" stroke="#6a4fbd" stroke-width="1.8"/></svg>
<div class="t" style="left:62.80px;top:830.54px;font-size:12px;color:#000;font-weight:normal;"><span style="display:inline-block;transform:scaleX(0.9377);transform-origin:0 0">Reports</span></div>
<svg class="b" style="left:19px;top:857.0px;" width="6" height="9" viewBox="0 0 6 9"><path d="M0.5 0.5 L4.6 4.2 L0.5 7.9" fill="none" stroke="#a6a6a6" stroke-width="1"/><path d="M0.5 0 V8.4" stroke="#7a7a7a" stroke-width="1"/></svg>
<svg class="b" style="left:40.9px;top:854.9px;overflow:visible" width="12" height="13" viewBox="0 0 12 13"><g fill="#e0603a"><ellipse cx="5.1" cy="2.4" rx="5.1" ry="2.4"/><path d="M0 4.5 Q5.1 7.7 10.2 4.5 V6.8 Q5.1 10 0 6.8 Z"/><path d="M0 7.9 Q5.1 11.1 10.2 7.9 V10 Q5.1 13.3 0 10 Z"/></g></svg>
<div class="t" style="left:62.80px;top:854.54px;font-size:12px;color:#000;font-weight:normal;"><span style="display:inline-block;transform:scaleX(0.9589);transform-origin:0 0">Data Providers</span></div>
<svg class="b" style="left:19px;top:881.0px;" width="6" height="9" viewBox="0 0 6 9"><path d="M0.5 0.5 L4.6 4.2 L0.5 7.9" fill="none" stroke="#a6a6a6" stroke-width="1"/><path d="M0.5 0 V8.4" stroke="#7a7a7a" stroke-width="1"/></svg>
<svg class="b" style="left:40.2px;top:878.5px;overflow:visible" width="12" height="12" viewBox="0 0 12 12"><path d="M5.8 0 L8.6 3.6 H7.4 L10 6.8 H8.6 L11.8 10 H6.8 V11.8 H4.8 V10 H0 L3.2 6.8 H1.8 L4.4 3.6 H3.2 Z" fill="#5a9f5c"/></svg>
<div class="t" style="left:62.80px;top:878.54px;font-size:12px;color:#000;font-weight:normal;"><span style="display:inline-block;transform:scaleX(0.9573);transform-origin:0 0">Directory Services</span></div>
<svg class="b" style="left:19px;top:905.0px;" width="6" height="9" viewBox="0 0 6 9"><path d="M0.5 0.5 L4.6 4.2 L0.5 7.9" fill="none" stroke="#a6a6a6" stroke-width="1"/><path d="M0.5 0 V8.4" stroke="#7a7a7a" stroke-width="1"/></svg>
<svg class="b" style="left:39.3px;top:902.2px;overflow:visible" width="14" height="14" viewBox="0 0 14 14"><g fill="#4a58b8"><path d="M6.5 0 H13.3 V6.8 L10.7 4.2 V2.6 H9.1 Z"/><path d="M3.3 3.2 H10.1 V10 L7.5 7.4 V5.8 H5.9 Z"/><path d="M0.1 6.4 H6.9 V13.2 L4.3 10.6 V9 H2.7 Z"/></g></svg>
<div class="t" style="left:62.80px;top:902.54px;font-size:12px;color:#000;font-weight:normal;"><span style="display:inline-block;transform:scaleX(0.9761);transform-origin:0 0">Continuous Delivery Pipelines</span></div>
<svg class="b" style="left:19px;top:929.0px;" width="6" height="9" viewBox="0 0 6 9"><path d="M0.5 0.5 L4.6 4.2 L0.5 7.9" fill="none" stroke="#a6a6a6" stroke-width="1"/><path d="M0.5 0 V8.4" stroke="#7a7a7a" stroke-width="1"/></svg>
<svg class="b" style="left:40.7px;top:926.7px;overflow:visible" width="11" height="13" viewBox="0 0 11 13"><path d="M0 0 H10.6 L6.8 5 V11.6 Q6.8 12.4 6 12 L4.2 10.8 V5 Z" fill="#6b5a52"/></svg>
<div class="t" style="left:62.80px;top:926.54px;font-size:12px;color:#000;font-weight:normal;"><span style="display:inline-block;transform:scaleX(0.9306);transform-origin:0 0">Filters</span></div>
<svg class="b" style="left:19px;top:953.0px;" width="6" height="9" viewBox="0 0 6 9"><path d="M0.5 0.5 L4.6 4.2 L0.5 7.9" fill="none" stroke="#a6a6a6" stroke-width="1"/><path d="M0.5 0 V8.4" stroke="#7a7a7a" stroke-width="1"/></svg>
<svg class="b" style="left:39px;top:950.3px;overflow:visible" width="14" height="13" viewBox="0 0 14 13"><path d="M7 0 L14 12.4 H0 Z" fill="#f4c04a"/><rect x="6.1" y="4" width="1.8" height="3.8" fill="#fde9a8"/><rect x="6.1" y="8.7" width="1.8" height="1.7" fill="#fde9a8"/></svg>
<div class="t" style="left:62.80px;top:950.54px;font-size:12px;color:#000;font-weight:normal;"><span style="display:inline-block;transform:scaleX(0.9631);transform-origin:0 0">Actions</span></div>
<svg class="b" style="left:19px;top:977.0px;" width="6" height="9" viewBox="0 0 6 9"><path d="M0.5 0.5 L4.6 4.2 L0.5 7.9" fill="none" stroke="#a6a6a6" stroke-width="1"/><path d="M0.5 0 V8.4" stroke="#7a7a7a" stroke-width="1"/></svg>
<svg class="b" style="left:39.3px;top:973.9px;overflow:visible" width="14" height="14" viewBox="0 0 14 14"><circle cx="6.75" cy="6.6" r="6.7" fill="#5b6d7a"/><path d="M6.3 3.2 V7 L8.9 9.2" stroke="#fff" stroke-width="1.4" fill="none"/></svg>
<div class="t" style="left:62.80px;top:974.54px;font-size:12px;color:#000;font-weight:normal;"><span style="display:inline-block;transform:scaleX(0.9297);transform-origin:0 0">Schedules</span></div>
<svg class="b" style="left:19px;top:1001.0px;" width="6" height="9" viewBox="0 0 6 9"><path d="M0.5 0.5 L4.6 4.2 L0.5 7.9" fill="none" stroke="#a6a6a6" stroke-width="1"/><path d="M0.5 0 V8.4" stroke="#7a7a7a" stroke-width="1"/></svg>
<svg class="b" style="left:40.7px;top:998.0px;overflow:visible" width="13" height="14" viewBox="0 0 13 14"><path d="M0 0 H6.6 L10.6 4 V7 A3.8 3.8 0 0 0 6.6 13 H0 Z" fill="#6aa84f"/><path d="M6.8 0.8 V4 H10" fill="none" stroke="#fff" stroke-width="0.8"/><circle cx="9.7" cy="11" r="2.6" fill="none" stroke="#6aa84f" stroke-width="1.6" stroke-dasharray="1.3 0.75"/><circle cx="9.7" cy="11" r="1.9" fill="none" stroke="#6aa84f" stroke-width="1.4"/></svg>
<div class="t" style="left:62.80px;top:998.54px;font-size:12px;color:#000;font-weight:normal;"><span style="display:inline-block;transform:scaleX(0.9277);transform-origin:0 0">Syslog Server</span></div>
<svg class="b" style="left:19px;top:1025.0px;" width="6" height="9" viewBox="0 0 6 9"><path d="M0.5 0.5 L4.6 4.2 L0.5 7.9" fill="none" stroke="#a6a6a6" stroke-width="1"/><path d="M0.5 0 V8.4" stroke="#7a7a7a" stroke-width="1"/></svg>
<svg class="b" style="left:38.2px;top:1023.1px;overflow:visible" width="17" height="13" viewBox="0 0 17 13"><g stroke="#6aa84f" stroke-width="1.3"><path d="M2 6.8 H8.3 M8.3 6.8 L5.5 1 M8.3 6.8 L14.6 2.6 M8.3 6.8 L14.6 10.8"/></g><g fill="#6aa84f"><circle cx="1.8" cy="6.6" r="1.6"/><circle cx="5.5" cy="1" r="1.5"/><circle cx="14.6" cy="2.6" r="1.5"/><circle cx="14.6" cy="10.8" r="1.5"/></g><circle cx="8.3" cy="6.8" r="2.4" fill="#fff" stroke="#6aa84f" stroke-width="1.6"/></svg>
<div class="t" style="left:62.80px;top:1022.54px;font-size:12px;color:#000;font-weight:normal;"><span style="display:inline-block;transform:scaleX(0.9335);transform-origin:0 0">SNMP Trap Server</span></div>
<svg class="b" style="left:19px;top:1048.0px;" width="6" height="9" viewBox="0 0 6 9"><path d="M0.5 0.5 L4.6 4.2 L0.5 7.9" fill="none" stroke="#a6a6a6" stroke-width="1"/><path d="M0.5 0 V8.4" stroke="#7a7a7a" stroke-width="1"/></svg>
<svg class="b" style="left:40.6px;top:1046.6px;overflow:visible" width="10" height="11" viewBox="0 0 10 11"><path d="M5.1 0 L9.8 4.2 H6.8 V8.4 H3.4 V4.2 H0.4 Z" fill="#676767"/><rect x="0" y="9.4" width="10" height="1.6" fill="#676767"/></svg>
<div class="t" style="left:62.80px;top:1045.54px;font-size:12px;color:#000;font-weight:normal;"><span style="display:inline-block;transform:scaleX(0.9258);transform-origin:0 0">Push Logs</span></div>
<svg class="b" style="left:40.7px;top:1068.9px;overflow:visible" width="13" height="14" viewBox="0 0 13 14"><path d="M0 0 H6.6 L10.6 4 V7 A3.8 3.8 0 0 0 6.6 13 H0 Z" fill="#707070"/><path d="M6.8 0.8 V4 H10" fill="none" stroke="#fff" stroke-width="0.8"/><circle cx="9.7" cy="11" r="2.6" fill="none" stroke="#707070" stroke-width="1.6" stroke-dasharray="1.3 0.75"/><circle cx="9.7" cy="11" r="1.9" fill="none" stroke="#707070" stroke-width="1.4"/></svg>
<div class="t" style="left:62.80px;top:1069.54px;font-size:12px;color:#000;font-weight:normal;"><span style="display:inline-block;transform:scaleX(0.9344);transform-origin:0 0">Service Log File</span></div>
<svg class="b" style="left:19px;top:1096.0px;" width="6" height="9" viewBox="0 0 6 9"><path d="M0.5 0.5 L4.6 4.2 L0.5 7.9" fill="none" stroke="#a6a6a6" stroke-width="1"/><path d="M0.5 0 V8.4" stroke="#7a7a7a" stroke-width="1"/></svg>
<svg class="b" style="left:39.5px;top:1093.7px;overflow:visible" width="13" height="14" viewBox="0 0 13 14"><path d="M5.16 2.20 L5.36 0.71 L7.64 0.71 L7.84 2.20 L8.66 2.54 L9.86 1.63 L11.47 3.24 L10.56 4.44 L10.90 5.26 L12.39 5.46 L12.39 7.74 L10.90 7.94 L10.56 8.76 L11.47 9.96 L9.86 11.57 L8.66 10.66 L7.84 11.00 L7.64 12.49 L5.36 12.49 L5.16 11.00 L4.34 10.66 L3.14 11.57 L1.53 9.96 L2.44 8.76 L2.10 7.94 L0.61 7.74 L0.61 5.46 L2.10 5.26 L2.44 4.44 L1.53 3.24 L3.14 1.63 L4.34 2.54 Z" fill="none" stroke="#6e6e6e" stroke-width="1.3" stroke-linejoin="round"/><circle cx="6.5" cy="6.6" r="2.0" fill="none" stroke="#6e6e6e" stroke-width="1.4"/></svg>
<div class="t" style="left:62.80px;top:1093.54px;font-size:12px;color:#000;font-weight:normal;"><span style="display:inline-block;transform:scaleX(0.9938);transform-origin:0 0">Options</span></div>
<svg class="b" style="left:39.6px;top:1120.5px;overflow:visible" width="14" height="8" viewBox="0 0 14 8"><circle cx="3.3" cy="3.8" r="2.5" fill="none" stroke="#707070" stroke-width="1.9"/><path d="M5.8 2.9 H13.6 V5.2 H12.4 V7.2 H10.4 V5.2 H9.6 V6.4 H7.8 V5.2 H5.8 Z" fill="#707070"/></svg>
<div class="t" style="left:62.80px;top:1117.54px;font-size:12px;color:#000;font-weight:normal;"><span style="display:inline-block;transform:scaleX(0.8972);transform-origin:0 0">License</span></div>
<div class="b" style="left:370px;top:61px;width:171px;height:22px;background:#0a78d0"></div>
<div class="t" style="left:376.50px;top:66.64px;font-size:12px;color:#fff;font-weight:normal;"><span style="display:inline-block;transform:scaleX(1.0059);transform-origin:0 0">My Log Monitoring Server</span></div>
<svg class="b" style="left:524px;top:68px;" width="11" height="11" viewBox="0 0 11 11"><path d="M1 1 L10 10 M10 1 L1 10" stroke="#fff" stroke-width="1.2"/></svg>
<div class="t" style="left:547.00px;top:66.64px;font-size:12px;color:#000;font-weight:normal;"><span style="display:inline-block;transform:scaleX(0.9795);transform-origin:0 0">Service Output</span></div>
<div class="b" style="left:370px;top:83px;width:1209px;height:2px;background:#125f96"></div>
<svg class="b" style="left:1565px;top:70px;" width="9" height="6" viewBox="0 0 9 6"><path d="M1 1 L4.5 4.5 L8 1" stroke="#555" stroke-width="1.1" fill="none"/></svg>
<div class="b" style="left:370px;top:85px;width:1209px;height:1101px;background:#f9f9f9;border:1px solid #d6d6d6;border-top:none;box-sizing:border-box"></div>
<div class="b" style="left:380px;top:95px;width:1189px;height:62px;background:#1e88e5"></div>
<div class="b" style="left:403px;top:101px;width:42px;height:14px;background:#a3cdf2;border-radius:3px"></div>
<div class="b" style="left:408px;top:106px;width:4px;height:4px;background:#1e88e5"></div>
<div class="b" style="left:417px;top:106px;width:2px;height:4px;background:#1e88e5"></div>
<div class="b" style="left:403px;top:120px;width:42px;height:14px;background:#a3cdf2;border-radius:3px"></div>
<div class="b" style="left:408px;top:125px;width:4px;height:4px;background:#1e88e5"></div>
<div class="b" style="left:417px;top:125px;width:2px;height:4px;background:#1e88e5"></div>
<div class="b" style="left:403px;top:139px;width:42px;height:14px;background:#a3cdf2;border-radius:3px"></div>
<div class="b" style="left:408px;top:144px;width:4px;height:4px;background:#1e88e5"></div>
<div class="b" style="left:417px;top:144px;width:2px;height:4px;background:#1e88e5"></div>
<div class="t" style="left:467.29px;top:107.25px;font-size:19.6px;color:#fff;font-weight:normal;"><span style="display:inline-block;transform:scaleX(1.0104);transform-origin:0 0">My Log Monitoring Server (HOYT)</span></div>
<div class="t" style="left:468.30px;top:132.34px;font-size:13.9px;color:#fff;font-weight:normal;"><span style="display:inline-block;transform:scaleX(1.0090);transform-origin:0 0">Configure server, device and endpoint connection properties.</span></div>
<svg class="b" style="left:1524px;top:113px;" width="27" height="27" viewBox="0 0 27 27"><path d="M15.54 2.83 A10.3 10.3 0 1 1 12.86 2.61" fill="none" stroke="#b5d8f6" stroke-width="3.8"/></svg>
<div class="b" style="left:391px;top:204px;width:1167px;height:911px;background:#fff;border:1px solid #acacac;box-sizing:border-box"></div>
<div class="b" style="left:393px;top:184px;width:53px;height:21px;background:linear-gradient(#f0f0f0,#e5e5e5);border:1px solid #acacac;box-sizing:border-box"></div>
<div class="t" style="left:399.60px;top:187.64px;font-size:12px;color:#000;font-weight:normal;"><span style="display:inline-block;transform:scaleX(0.9470);transform-origin:0 0">General</span></div>
<div class="b" style="left:446px;top:184px;width:114px;height:21px;background:linear-gradient(#f0f0f0,#e5e5e5);border:1px solid #acacac;box-sizing:border-box"></div>
<div class="t" style="left:452.20px;top:187.64px;font-size:12px;color:#000;font-weight:normal;"><span style="display:inline-block;transform:scaleX(0.9813);transform-origin:0 0">Windows Logon As</span></div>
<div class="b" style="left:560px;top:184px;width:36px;height:21px;background:linear-gradient(#f0f0f0,#e5e5e5);border:1px solid #acacac;box-sizing:border-box"></div>
<div class="t" style="left:565.30px;top:187.64px;font-size:12px;color:#000;font-weight:normal;"><span style="display:inline-block;transform:scaleX(0.8120);transform-origin:0 0">SFTP</span></div>
<div class="b" style="left:643px;top:184px;width:60px;height:21px;background:linear-gradient(#f0f0f0,#e5e5e5);border:1px solid #acacac;box-sizing:border-box"></div>
<div class="t" style="left:646.98px;top:187.64px;font-size:12px;color:#000;font-weight:normal;"><span style="display:inline-block;transform:scaleX(1.0174);transform-origin:0 0">Inventory</span></div>
<div class="b" style="left:596px;top:182px;width:48px;height:23px;background:#fff;border:1px solid #acacac;border-bottom:none;box-sizing:border-box"></div>
<div class="t" style="left:602.80px;top:186.64px;font-size:12px;color:#000;font-weight:normal;"><span style="display:inline-block;transform:scaleX(0.9433);transform-origin:0 0">SNMP</span></div>
<div class="b" style="left:413px;top:230px;width:14px;height:13px;background:#fff;border:1px solid #6e6e6e;box-sizing:border-box"></div>
<svg class="b" style="left:413px;top:230px;" width="14" height="13" viewBox="0 0 14 13"><path d="M2.9 6.7 L6.6 10.1 L11.2 2.9" stroke="#1a1a1a" stroke-width="2" fill="none"/></svg>
<div class="t" style="left:432.10px;top:229.64px;font-size:12px;color:#000;font-weight:normal;"><span style="display:inline-block;transform:scaleX(0.9662);transform-origin:0 0">Enabled</span></div>
<div class="t" style="left:417.10px;top:263.81px;font-size:13.3px;color:#000;font-weight:bold;"><span style="display:inline-block;transform:scaleX(1.0205);transform-origin:0 0">Connection</span></div>
<div class="t" style="left:413.60px;top:299.64px;font-size:12px;color:#000;font-weight:normal;"><span style="display:inline-block;transform:scaleX(0.9631);transform-origin:0 0">Version</span></div>
<div class="t" style="left:621.60px;top:299.64px;font-size:12px;color:#000;font-weight:normal;"><span style="display:inline-block;transform:scaleX(0.9129);transform-origin:0 0">Port</span></div>
<div class="t" style="left:707.30px;top:299.64px;font-size:12px;color:#000;font-weight:normal;"><span style="display:inline-block;transform:scaleX(0.9984);transform-origin:0 0">Timeout</span></div>
<div class="b" style="left:412px;top:319px;width:200px;height:28px;background:linear-gradient(#efefef,#e5e5e5);border:1px solid #acacac;box-sizing:border-box"></div>
<div class="t" style="left:418.20px;top:327.04px;font-size:12px;color:#000;font-weight:normal;"><span style="display:inline-block;transform:scaleX(0.8931);transform-origin:0 0">V2</span></div>
<svg class="b" style="left:598.5px;top:329px;" width="8" height="6" viewBox="0 0 8 6"><path d="M1.2 1 L3.7 3.6 L6.2 1" stroke="#505050" stroke-width="1.2" fill="none"/></svg>
<div class="b" style="left:620px;top:319px;width:80px;height:28px;background:#fff;border:1px solid #c3c3c3;border-radius:2px;box-sizing:border-box"></div>
<div class="t" style="left:627.70px;top:327.04px;font-size:12px;color:#000;font-weight:normal;"><span style="display:inline-block;transform:scaleX(0.8650);transform-origin:0 0">161</span></div>
<div class="b" style="left:706px;top:319px;width:80px;height:28px;background:#fff;border:1px solid #c3c3c3;border-radius:2px;box-sizing:border-box"></div>
<div class="t" style="left:714.00px;top:327.04px;font-size:12px;color:#000;font-weight:normal;"><span style="display:inline-block;transform:scaleX(0.8191);transform-origin:0 0">15</span></div>
<div class="t" style="left:417.10px;top:374.51px;font-size:13.3px;color:#000;font-weight:bold;"><span style="display:inline-block;transform:scaleX(1.0446);transform-origin:0 0">Community Names</span></div>
<div class="t" style="left:412.80px;top:410.04px;font-size:12px;color:#000;font-weight:normal;"><span style="display:inline-block;transform:scaleX(0.9296);transform-origin:0 0">Get</span></div>
<div class="b" style="left:412px;top:429px;width:300px;height:28px;background:#fff;border:1px solid #c3c3c3;border-radius:2px;box-sizing:border-box"></div>
<div class="t" style="left:419.20px;top:437.04px;font-size:12px;color:#000;font-weight:normal;"><span style="display:inline-block;transform:scaleX(1.0238);transform-origin:0 0">public</span></div>
<div class="t" style="left:412.80px;top:483.64px;font-size:12px;color:#000;font-weight:normal;"><span style="display:inline-block;transform:scaleX(0.8995);transform-origin:0 0">Set</span></div>
<div class="b" style="left:412px;top:503px;width:300px;height:28px;background:#fff;border:1px solid #c3c3c3;border-radius:2px;box-sizing:border-box"></div>
<div class="t" style="left:419.20px;top:510.64px;font-size:12px;color:#000;font-weight:normal;"><span style="display:inline-block;transform:scaleX(0.9878);transform-origin:0 0">private</span></div>
<div class="b" style="left:412px;top:551px;width:80px;height:26px;background:#1e88e5;border:1px solid #0b4f95;border-radius:2px;box-sizing:border-box"></div>
<div class="b" style="left:414px;top:553px;width:76px;height:22px;border:1px dotted #0b3a70;box-sizing:border-box"></div>
<div class="t" style="left:441.70px;top:557.94px;font-size:12px;color:#fff;font-weight:normal;"><span style="display:inline-block;transform:scaleX(0.9350);transform-origin:0 0">Test</span></div>
<div class="b" style="left:500px;top:551px;width:88px;height:26px;background:#1e88e5;border:1px solid #0b5aa5;border-radius:2px;box-sizing:border-box"></div>
<div class="t" style="left:505.00px;top:557.94px;font-size:12px;color:#fff;font-weight:normal;"><span style="display:inline-block;transform:scaleX(0.9620);transform-origin:0 0">SNMP Browser</span></div>
<div class="b" style="left:408px;top:597px;width:1133px;height:32px;background:#dfdfdf"></div>
<div class="t" style="left:416.10px;top:606.81px;font-size:13.3px;color:#000;font-weight:normal;"><span style="display:inline-block;transform:scaleX(1.0463);transform-origin:0 0">Verbose Output</span></div>
<div class="b" style="left:530px;top:599px;width:27px;height:27px;background:#e6e6e6;border:1px solid #cacaca;border-radius:2px;box-sizing:border-box"></div>
<svg class="b" style="left:530px;top:599px;" width="27" height="27" viewBox="0 0 27 27"><path d="M5.2 17.5 V6 Q5.2 4.8 6.4 4.8 H16.5" fill="none" stroke="#9b9b9b" stroke-width="1.6"/><rect x="8.3" y="8" width="11.4" height="13.6" rx="1.2" fill="none" stroke="#9b9b9b" stroke-width="1.6"/></svg>
<div class="b" style="left:562px;top:599px;width:28px;height:27px;background:#e6e6e6;border:1px solid #cacaca;border-radius:2px;box-sizing:border-box"></div>
<svg class="b" style="left:562px;top:599px;" width="28" height="27" viewBox="0 0 28 27"><rect x="7" y="5.5" width="14" height="2" fill="#333"/><rect x="11" y="4" width="6" height="2" rx="1" fill="#333"/><path d="M8.8 9.2 H19.2 V19.5 Q19.2 21 17.7 21 H10.3 Q8.8 21 8.8 19.5 Z" fill="none" stroke="#333" stroke-width="1.9"/></svg>
<div class="b" style="left:408px;top:629px;width:1133px;height:168px;background:#fff;border:1px solid #a0a0a0;box-sizing:border-box"></div>
<div class="b" style="left:409px;top:630px;width:1131px;height:10px;background:#fdfdfd"></div>
<div class="b" style="left:409px;top:640px;width:1131px;height:13px;background:#f3f4f5"></div>
<div class="b" style="left:409px;top:653px;width:1131px;height:1px;background:#d5d5d5"></div>
<div class="b" style="left:441px;top:630px;width:155px;height:24px;background:linear-gradient(#f1f8fd 0,#f1f8fd 40%,#ddeefa 40%,#ddeefa 100%);border:1px solid #b7dcf2;box-sizing:border-box"></div>
<div class="b" style="left:595px;top:630px;width:1px;height:23px;background:#e2e2e2"></div>
<svg class="b" style="left:513px;top:631px;" width="10" height="5" viewBox="0 0 10 5"><path d="M1 4.5 L5 0.8 L9 4.5 Z" fill="#9bb3c7"/></svg>
<div class="t" style="left:446.70px;top:635.64px;font-size:12px;color:#000;font-weight:normal;"><span style="display:inline-block;transform:scaleX(0.9267);transform-origin:0 0">Time</span></div>
<div class="t" style="left:601.60px;top:635.64px;font-size:12px;color:#000;font-weight:normal;"><span style="display:inline-block;transform:scaleX(0.9364);transform-origin:0 0">Message</span></div>
<svg class="b" style="left:416.5px;top:658px;" width="16" height="16" viewBox="0 0 16 16"><circle cx="8" cy="8" r="8" fill="#1e73c8"/><rect x="7" y="3.6" width="2" height="2" fill="#fff"/><rect x="7" y="6.6" width="2" height="5.6" fill="#fff"/></svg>
<div class="t" style="left:449.20px;top:659.74px;font-size:12px;color:#000;font-weight:normal;"><span style="display:inline-block;transform:scaleX(0.9854);transform-origin:0 0">5/6/2021 11:37:19.343 AM</span></div>
<div class="t" style="left:604.70px;top:659.74px;font-size:12px;color:#000;font-weight:normal;"><span style="display:inline-block;transform:scaleX(0.9671);transform-origin:0 0">SnmpClient: Opening connection...&nbsp; Host: HOYT&nbsp; Port: 161</span></div>
<svg class="b" style="left:416.5px;top:682px;" width="16" height="16" viewBox="0 0 16 16"><circle cx="8" cy="8" r="8" fill="#1e73c8"/><rect x="7" y="3.6" width="2" height="2" fill="#fff"/><rect x="7" y="6.6" width="2" height="5.6" fill="#fff"/></svg>
<div class="t" style="left:449.20px;top:683.94px;font-size:12px;color:#000;font-weight:normal;"><span style="display:inline-block;transform:scaleX(0.9854);transform-origin:0 0">5/6/2021 11:37:19.354 AM</span></div>
<div class="t" style="left:604.70px;top:683.94px;font-size:12px;color:#000;font-weight:normal;"><span style="display:inline-block;transform:scaleX(0.9628);transform-origin:0 0">SnmpClient: Variable: Id: 1.3.6.1.2.1.1.1.0; Data: Hardware: Intel64 Family 6 Model 158 Stepping 10 AT/AT COMPATIBLE - Software: Windows Version 6.3 (Build 19042</span></div>
<svg class="b" style="left:416.5px;top:722px;" width="16" height="16" viewBox="0 0 16 16"><circle cx="8" cy="8" r="8" fill="#1e73c8"/><rect x="7" y="3.6" width="2" height="2" fill="#fff"/><rect x="7" y="6.6" width="2" height="5.6" fill="#fff"/></svg>
<div class="t" style="left:449.20px;top:724.04px;font-size:12px;color:#000;font-weight:normal;"><span style="display:inline-block;transform:scaleX(0.9854);transform-origin:0 0">5/6/2021 11:37:19.363 AM</span></div>
<div class="t" style="left:604.70px;top:724.04px;font-size:12px;color:#000;font-weight:normal;"><span style="display:inline-block;transform:scaleX(0.9814);transform-origin:0 0">Test complete.</span></div>
<div class="t" style="left:604.70px;top:699.84px;font-size:12px;color:#000;font-weight:normal;"><span style="display:inline-block;transform:scaleX(0.9797);transform-origin:0 0">Multiprocessor Free)</span></div>
<div class="b" style="left:395px;top:1135px;width:80px;height:26px;background:#1e88e5;border:1px solid #0b5aa5;border-radius:2px;box-sizing:border-box"></div>
<div class="t" style="left:422.80px;top:1141.64px;font-size:12px;color:#fff;font-weight:normal;"><span style="display:inline-block;transform:scaleX(0.8888);transform-origin:0 0">Save</span></div>
<div class="b" style="left:1386px;top:1135px;width:80px;height:26px;background:#1e88e5;border:1px solid #0b5aa5;border-radius:2px;box-sizing:border-box"></div>
<div class="t" style="left:1409.50px;top:1141.64px;font-size:12px;color:#fff;font-weight:normal;"><span style="display:inline-block;transform:scaleX(0.9682);transform-origin:0 0">Delete</span></div>
<div class="b" style="left:1474px;top:1135px;width:80px;height:26px;background:#1e88e5;border:1px solid #0b5aa5;border-radius:2px;box-sizing:border-box"></div>
<div class="t" style="left:1499.80px;top:1141.64px;font-size:12px;color:#fff;font-weight:normal;"><span style="display:inline-block;transform:scaleX(0.9127);transform-origin:0 0">Close</span></div>
</body></html>
